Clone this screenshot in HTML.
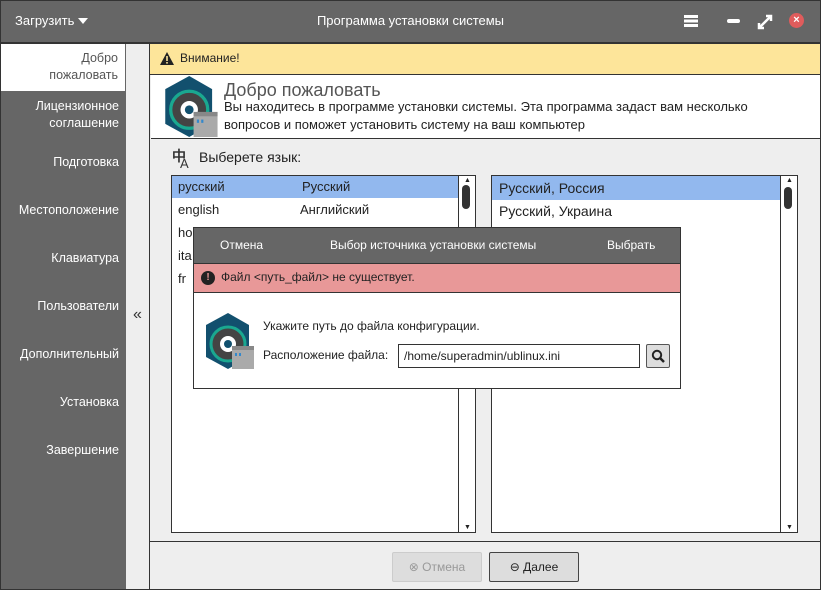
<!DOCTYPE html>
<html><head><meta charset="utf-8"><style>
*{box-sizing:border-box;margin:0;padding:0}
body{width:821px;height:590px;overflow:hidden;font-family:"Liberation Sans","DejaVu Sans",sans-serif;font-size:13px;color:#222;background:#eee;position:relative}
.a{position:absolute}
.side div{position:absolute;left:0;width:126px;text-align:right;padding-right:7px;color:#fff;font-size:12.5px;line-height:17px}
</style></head><body>
<div class="a" style="left:0;top:0;width:821px;height:44px;background:#666;border:1px solid #333;border-bottom:2px solid #333"></div>
<div class="a" style="left:15px;top:13px;color:#fff;font-size:13px">Загрузить</div>
<div class="a" style="left:78px;top:18px;width:0;height:0;border-left:5px solid transparent;border-right:5px solid transparent;border-top:6px solid #fff"></div>
<div class="a" style="left:0;top:13px;width:821px;text-align:center;color:#fff;font-size:13px">Программа установки системы</div>
<div class="a" style="left:684px;top:15px;width:14px;height:2.5px;background:#fff;box-shadow:0 4.5px #fff,0 9px #fff"></div>
<div class="a" style="left:727px;top:19px;width:13px;height:4px;background:#fff;border-radius:2px"></div>
<svg class="a" style="left:757px;top:14px" width="16" height="16"><path d="M2 14L14 2M9 2h5v5M2 9v5h5" stroke="#fff" stroke-width="2.5" fill="none"/></svg>
<div class="a" style="left:789px;top:13px;width:15px;height:15px;border-radius:50%;background:#e05c5c;color:#fff;font-size:11px;font-weight:bold;text-align:center;line-height:15px">×</div>

<div class="a side" style="left:0;top:44px;width:126px;height:546px;background:#666">
<div style="top:0;height:47px;width:125px;background:#fff;color:#555;padding-top:6px">Добро<br>пожаловать</div>
<div style="top:54px">Лицензионное<br>соглашение</div>
<div style="top:110px">Подготовка</div>
<div style="top:158px">Местоположение</div>
<div style="top:206px">Клавиатура</div>
<div style="top:254px">Пользователи</div>
<div style="top:302px">Дополнительный</div>
<div style="top:350px">Установка</div>
<div style="top:398px">Завершение</div>
</div>
<div class="a" style="left:126px;top:44px;width:24px;height:546px;background:#eee;border-right:1px solid #333"></div>
<div class="a" style="left:133px;top:306px;font-size:16px;color:#333">«</div>

<div class="a" style="left:150px;top:44px;width:671px;height:31px;background:#fde59a;border-bottom:1px solid #333"></div>
<svg class="a" style="left:160px;top:52px" width="14" height="13"><path d="M7 0L14 13H0Z" fill="#222"/><rect x="6.2" y="4" width="1.6" height="5" fill="#fde59a"/><rect x="6.2" y="10" width="1.6" height="1.6" fill="#fde59a"/></svg>
<div class="a" style="left:180px;top:51px;font-size:12px">Внимание!</div>
<div class="a" style="left:151px;top:75px;width:670px;height:64px;background:#fff;border-bottom:1px solid #333"></div>
<svg class="a" style="left:164px;top:76px" width="57" height="61" viewBox="0 0 50 56"><path d="M22 0L43 12V44L22 56L0 44V12Z" fill="#12506e"/><circle cx="22" cy="31" r="17" fill="#444" stroke="#1aa890" stroke-width="3"/><circle cx="22" cy="31" r="8" fill="#fff"/><circle cx="22" cy="31" r="4" fill="#12506e"/><rect x="26" y="33" width="22" height="23" fill="#aaa"/><rect x="26" y="33" width="22" height="4" fill="#888"/><rect x="29" y="40" width="2" height="3" fill="#38c"/><rect x="33" y="40" width="2" height="3" fill="#38c"/></svg>
<div class="a" style="left:224px;top:80px;font-size:18px;color:#555">Добро пожаловать</div>
<div class="a" style="left:224px;top:98px;font-size:13px;line-height:18px;width:580px">Вы находитесь в программе установки системы. Эта программа задаст вам несколько вопросов и поможет установить систему на ваш компьютер</div>

<div class="a" style="left:172px;top:146px;font-size:14px;font-weight:bold;color:#333">中</div>
<div class="a" style="left:180px;top:156px;font-size:13px;color:#333">A</div>
<div class="a" style="left:199px;top:149px;font-size:14px">Выберете язык:</div>

<div class="a" style="left:171px;top:175px;width:305px;height:358px;background:#fff;border:1px solid #333"></div>
<div class="a" style="left:172px;top:176px;width:286px;height:22px;background:#92b8ee"></div>
<div class="a" style="left:178px;top:179px">русский</div><div class="a" style="left:302px;top:179px">Русский</div>
<div class="a" style="left:178px;top:202px">english</div><div class="a" style="left:300px;top:202px">Английский</div>
<div class="a" style="left:178px;top:225px">ho</div><div class="a" style="left:178px;top:248px">ita</div><div class="a" style="left:178px;top:271px">fr</div>
<div class="a" style="left:458px;top:176px;width:1px;height:356px;background:#333"></div>
<div class="a" style="left:462px;top:185px;width:8px;height:24px;border-radius:4px;background:#333"></div>

<div class="a" style="left:491px;top:175px;width:307px;height:358px;background:#fff;border:1px solid #333"></div>
<div class="a" style="left:492px;top:176px;width:288px;height:24px;background:#92b8ee"></div>
<div class="a" style="left:499px;top:180px;font-size:14px">Русский, Россия</div>
<div class="a" style="left:499px;top:203px;font-size:14px">Русский, Украина</div>
<div class="a" style="left:780px;top:176px;width:1px;height:356px;background:#333"></div>
<div class="a" style="left:784px;top:187px;width:8px;height:22px;border-radius:4px;background:#333"></div>
<div class="a" style="left:464px;top:524px;font-size:7px">▼</div><div class="a" style="left:786px;top:524px;font-size:7px">▼</div>
<div class="a" style="left:464px;top:177px;font-size:7px">▲</div><div class="a" style="left:786px;top:177px;font-size:7px">▲</div>

<div class="a" style="left:150px;top:541px;width:671px;height:1px;background:#333"></div>
<div class="a" style="left:392px;top:552px;width:90px;height:30px;border:1px solid #ccc;border-radius:2px;background:#ddd;color:#999;font-size:12px;line-height:28px;text-align:center">⊗ Отмена</div>
<div class="a" style="left:489px;top:552px;width:90px;height:30px;border:1px solid #444;border-radius:2px;background:#ddd;font-size:12px;line-height:28px;text-align:center">⊖ Далее</div>
<div class="a" style="left:0;top:0;width:821px;height:590px;border:1px solid #333"></div>

<div class="a" style="left:193px;top:227px;width:488px;height:162px;background:#fff;border:1px solid #333"></div>
<div class="a" style="left:193px;top:227px;width:488px;height:37px;background:#666;border:1px solid #333"></div>
<div class="a" style="left:220px;top:238px;color:#fff;font-size:12px">Отмена</div>
<div class="a" style="left:330px;top:238px;color:#fff;font-size:12px">Выбор источника установки системы</div>
<div class="a" style="left:607px;top:238px;color:#fff;font-size:12px">Выбрать</div>
<div class="a" style="left:194px;top:264px;width:486px;height:29px;background:#e89898;border-bottom:1px solid #333"></div>
<div class="a" style="left:201px;top:271px;width:14px;height:14px;border-radius:50%;background:#222;color:#e89898;font-size:10px;font-weight:bold;text-align:center;line-height:14px">!</div>
<div class="a" style="left:221px;top:270px;font-size:12px">Файл &lt;путь_файл&gt; не существует.</div>
<svg class="a" style="left:205px;top:313px" width="52" height="56" viewBox="0 0 50 56"><path d="M22 0L43 12V44L22 56L0 44V12Z" fill="#12506e"/><circle cx="22" cy="31" r="17" fill="#444" stroke="#1aa890" stroke-width="3"/><circle cx="22" cy="31" r="8" fill="#fff"/><circle cx="22" cy="31" r="4" fill="#12506e"/><rect x="26" y="33" width="22" height="23" fill="#aaa"/><rect x="26" y="33" width="22" height="4" fill="#888"/><rect x="29" y="40" width="2" height="3" fill="#38c"/><rect x="33" y="40" width="2" height="3" fill="#38c"/></svg>
<div class="a" style="left:263px;top:319px;font-size:12px">Укажите путь до файла конфигурации.</div>
<div class="a" style="left:263px;top:348px;font-size:12px">Расположение файла:</div>
<div class="a" style="left:398px;top:344px;width:242px;height:24px;border:1px solid #333;font-size:12px;line-height:22px;padding-left:5px">/home/superadmin/ublinux.ini</div>
<div class="a" style="left:646px;top:344px;width:24px;height:24px;border:1px solid #555;background:#ddd;border-radius:2px"></div>
<svg class="a" style="left:651px;top:349px" width="14" height="14"><circle cx="6" cy="6" r="4.2" stroke="#222" stroke-width="2" fill="none"/><path d="M9 9L13 13" stroke="#222" stroke-width="2.5"/></svg>
</body></html>
